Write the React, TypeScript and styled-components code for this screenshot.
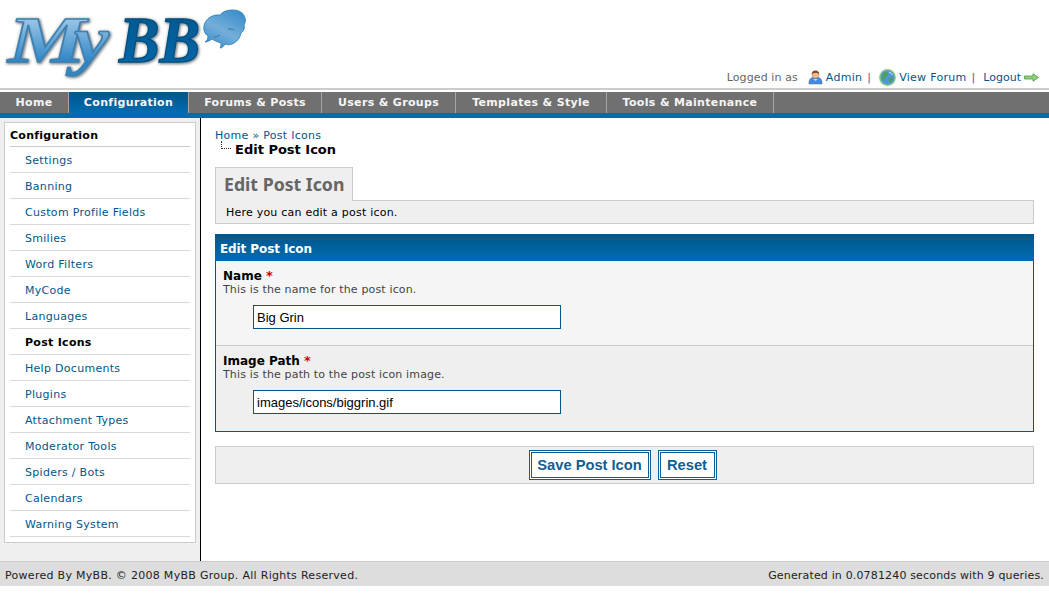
import React from 'react';
import styled, { createGlobalStyle } from 'styled-components';

const GlobalStyle = createGlobalStyle`
  html, body {
    margin: 0;
    padding: 0;
    background: #fff;
    font-family: "DejaVu Sans", Verdana, sans-serif;
    font-size: 11px;
    letter-spacing: 0.29px;
    color: #000;
  }
  a { color: #026cb1; text-decoration: none; }
`;

const Logo = styled.svg`
  display: block;
  position: absolute;
  left: 0;
  top: 0;
`;

const LogoWord = styled.text`
  font-family: "Liberation Serif", serif;
  font-style: italic;
  font-weight: bold;
  font-size: 66px;
  letter-spacing: 0;
  stroke-width: 1.4px;
  filter: drop-shadow(1px 1px 1px #858a8f) drop-shadow(0 0 1.5px #b4b9be);
`;

const Header = styled.header`
  position: relative;
  height: 88px;
  border-bottom: 2px solid #ccc;
`;

const UserBar = styled.div`
  position: absolute;
  right: 10px;
  top: 68px;
  display: flex;
  align-items: center;
  height: 18px;
  color: #666;
  letter-spacing: 0.1px;
  white-space: nowrap;
`;

const UserLink = styled.a<{ $gap?: number }>`
  display: inline-flex;
  align-items: center;
  gap: 3px;
  margin-left: ${(p) => p.$gap || 0}px;
  color: #02568a;
  letter-spacing: 0.29px;
`;

const LogoutLink = styled(UserLink)`
  letter-spacing: 0;
`;

const Pipe = styled.span`
  color: #7a4a8c;
  margin-left: 5px;
`;

const Nav = styled.nav`
  margin-top: 2px;
  display: flex;
  height: 21px;
  background: #707070;
  border-bottom: 5px solid #026cb1;
`;

const Tab = styled.a<{ $active?: boolean; $w: number }>`
  display: block;
  box-sizing: border-box;
  width: ${(p) => p.$w}px;
  text-align: center;
  line-height: 21px;
  font-weight: bold;
  letter-spacing: 0.33px;
  color: #f5f5f5;
  border-right: 1px solid #a5a5a5;
  background: ${(p) => (p.$active ? 'linear-gradient(#02568a, #026cb1)' : 'transparent')};
  white-space: nowrap;
`;

const Page = styled.div`
  display: flex;
  align-items: stretch;
`;

const Sidebar = styled.aside`
  width: 192px;
  flex: none;
  padding: 4px 4px 18px;
  background: #efefef;
  border-right: 1px solid #000;
`;

const SideBox = styled.div`
  background: #fff;
  border: 1px solid #ccc;
  padding: 0 5px 5px;
`;

const SideTitle = styled.div`
  height: 23px;
  line-height: 25px;
  font-weight: bold;
  letter-spacing: 0.25px;
  border-bottom: 1px solid #ccc;
`;

const SideItem = styled.a<{ $active?: boolean }>`
  display: block;
  height: 25px;
  line-height: 27px;
  padding-left: 15px;
  border-bottom: 1px solid #d9d9d9;
  color: ${(p) => (p.$active ? '#000' : '#02568a')};
  font-weight: ${(p) => (p.$active ? 'bold' : 'normal')};
`;

const Main = styled.main`
  flex: 1;
  min-width: 0;
  padding: 11px 15px 0 14px;
`;

const Crumbs = styled.div`
  color: #02568a;
  line-height: 13px;
`;

const CurrentCrumb = styled.div`
  position: relative;
  margin-left: 20px;
  font-size: 13px;
  font-weight: bold;
  letter-spacing: 0;
  line-height: 16px;
  &::before {
    content: "";
    position: absolute;
    left: -14px;
    top: -1px;
    width: 9px;
    height: 7px;
    border-left: 1px dotted #333;
    border-bottom: 1px dotted #333;
  }
`;

const PageTab = styled.h2`
  display: block;
  box-sizing: border-box;
  margin: 9px 0 0;
  height: 34px;
  width: 138px;
  padding-left: 8px;
  background: #efefef;
  border: 1px solid #ccc;
  border-bottom: 0;
  color: #666;
  font-family: "Noto Sans", Tahoma, sans-serif;
  font-size: 17.7px;
  font-weight: 700;
  letter-spacing: 0;
  line-height: 33px;
  white-space: nowrap;
  position: relative;
  z-index: 1;
`;

const Intro = styled.div`
  box-sizing: border-box;
  margin-top: -1px;
  height: 24px;
  line-height: 24px;
  padding-left: 10px;
  background: #efefef;
  border: 1px solid #ccc;
  letter-spacing: 0.22px;
`;

const Panel = styled.section`
  margin-top: 10px;
  border: 1px solid #02568a;
  border-top: 0;
`;

const PanelHead = styled.div`
  height: 27px;
  line-height: 30px;
  margin: 0 -1px;
  padding-left: 5px;
  background: linear-gradient(#02568a, #026cb1);
  color: #fff;
  font-size: 12px;
  font-weight: bold;
  letter-spacing: -0.1px;
`;

const Row = styled.div<{ $alt?: boolean }>`
  box-sizing: border-box;
  height: 85px;
  padding: 8px 7px 0;
  background: ${(p) => (p.$alt ? '#efefef' : '#f5f5f5')};
  border-bottom: ${(p) => (p.$alt ? '0' : '1px solid #ccc')};
`;

const Label = styled.label`
  display: block;
  font-size: 12px;
  font-weight: bold;
  letter-spacing: 0;
  line-height: 13px;
`;

const Required = styled.span`
  color: #c00;
  font-size: 13px;
`;

const Hint = styled.div`
  color: #444;
  line-height: 13px;
  letter-spacing: 0.15px;
`;

const TextInput = styled.input`
  display: block;
  box-sizing: border-box;
  margin: 9px 0 0 30px;
  width: 308px;
  height: 24px;
  padding: 0 3px;
  border: 1px solid #02568a;
  background: #fff;
  color: #000;
  font-family: "Liberation Sans", Arial, sans-serif;
  font-size: 13px;
  letter-spacing: 0;
  outline: 0;
`;

const ButtonBar = styled.div`
  margin-top: 14px;
  height: 38px;
  box-sizing: border-box;
  display: flex;
  justify-content: center;
  align-items: center;
  gap: 7px;
  padding-right: 4px;
  background: #efefef;
  border: 1px solid #ccc;
`;

const Btn = styled.button<{ $w: number }>`
  box-sizing: border-box;
  width: ${(p) => p.$w}px;
  height: 30px;
  padding: 0;
  border: 3px double #0f5f96;
  background: #fff;
  color: #0f5f96;
  font-family: "Liberation Sans", Arial, sans-serif;
  font-size: 14.7px;
  font-weight: bold;
  letter-spacing: 0;
`;

const Footer = styled.footer`
  display: flex;
  justify-content: space-between;
  height: 24px;
  line-height: 27px;
  padding: 0 5px;
  background: #ddd;
  border-top: 1px solid #ccc;
  color: #222;
`;

const FooterStats = styled.span`
  letter-spacing: 0.16px;
`;

const sideLinks = [
  'Settings', 'Banning', 'Custom Profile Fields', 'Smilies', 'Word Filters', 'MyCode', 'Languages',
  'Post Icons', 'Help Documents', 'Plugins', 'Attachment Types', 'Moderator Tools', 'Spiders / Bots',
  'Calendars', 'Warning System',
];

const tabs = [
  { label: 'Home', width: 69 },
  { label: 'Configuration', width: 120 },
  { label: 'Forums & Posts', width: 133 },
  { label: 'Users & Groups', width: 134 },
  { label: 'Templates & Style', width: 151 },
  { label: 'Tools & Maintenance', width: 167 },
];

const MyBBLogo = () => (
  <Logo width="260" height="86" viewBox="0 0 260 86">
    <defs>
      <linearGradient id="my" x1="0" y1="0" x2="0" y2="1">
        <stop offset="0.15" stopColor="#a9cde9" />
        <stop offset="0.8" stopColor="#2f86c6" />
      </linearGradient>
      <linearGradient id="bb" x1="0" y1="0" x2="0" y2="1">
        <stop offset="0" stopColor="#02568a" />
        <stop offset="1" stopColor="#0468ae" />
      </linearGradient>
      <linearGradient id="bubble" x1="0.8" y1="0" x2="0.2" y2="1">
        <stop offset="0" stopColor="#3a8ecb" />
        <stop offset="0.55" stopColor="#74aed9" />
        <stop offset="1" stopColor="#3d8dca" />
      </linearGradient>
    </defs>
    <LogoWord y="62" fill="url(#my)" stroke="#3d80b2">
      <tspan x="8" textLength="78" lengthAdjust="spacingAndGlyphs">M</tspan>
      <tspan x="74" textLength="35" lengthAdjust="spacingAndGlyphs">y</tspan>
    </LogoWord>
    <LogoWord x="119" y="62" textLength="81" lengthAdjust="spacingAndGlyphs" fill="url(#bb)" stroke="#02507f">BB</LogoWord>
    <path
      d="M220 15c3-4 8-5 13-5 6 0 11 3 12 8 1 3 0 5-1 7 1 3 0 6-3 8-1 5-4 9-9 11-2 1-5 1-7 0-1 2-3 4-5 4 1-1 1-3 1-5-3-1-6-2-9-4-2 1-4 3-7 3 2-1 3-3 3-6-3-2-5-6-4-10 1-6 6-10 12-11 1 0 3 0 4 0z"
      fill="url(#bubble)" stroke="#2379b6" strokeWidth="0.8"
    />
    <path d="M228 29c2 0 4 0 6 1M214 37c2 0 4-1 6-2" stroke="#1f6fa8" strokeWidth="0.8" fill="none" />
  </Logo>
);

const UserIcon = () => (
  <svg width="15" height="15" viewBox="0 0 15 15">
    <path d="M1 14c-.500-3 1-6 3.500-6.500h6c2.500.500 4 3.500 3.500 6.500z" fill="#3f8be8" stroke="#6d7a8c" strokeWidth=".6" />
    <path d="M5 9l2.500 2L10 9" fill="#bcd8f5" />
    <circle cx="7.500" cy="5" r="3.300" fill="#efbd96" stroke="#9a6a45" strokeWidth=".5" />
    <path d="M3.800 4.500C3.600 1.500 5.500.500 7.500.500s3.900 1 3.700 4C10 3 9 2.800 7.500 3s-2.700 0-3.700 1.500z" fill="#8a4a22" />
  </svg>
);

const GlobeIcon = () => (
  <svg width="17" height="17" viewBox="0 0 17 17">
    <circle cx="8.500" cy="8.500" r="7.700" fill="#4f97d6" stroke="#8cc48a" strokeWidth="1.400" />
    <path d="M5 3.500c2-1 4 0 4 2s-2 2-3 4-1 3-2 2-2-5 1-8zM10 9c2-1 4 0 4 1s-2 3.500-3 3.500-2-2.500-1-4.500z" fill="#4f9f62" />
    <path d="M10 3.500c1.500 0 3 1.200 3.500 2.500" stroke="#d5ecf7" strokeWidth="1" fill="none" />
  </svg>
);

const ArrowIcon = () => (
  <svg width="15" height="9" viewBox="0 0 15 9">
    <path d="M.500 3h8.500V.700L14.500 4.500 9 8.300V6H.500z" fill="#8fcf7a" stroke="#4f9a4a" strokeWidth=".8" />
  </svg>
);

export default function App() {
  return (
    <>
      <GlobalStyle />
      <Header>
        <MyBBLogo />
        <UserBar>
          Logged in as
          <UserLink $gap={10}><UserIcon />Admin</UserLink>
          <Pipe>|</Pipe>
          <UserLink $gap={8}><GlobeIcon />View Forum</UserLink>
          <Pipe>|</Pipe>
          <LogoutLink $gap={8}>Logout<ArrowIcon /></LogoutLink>
        </UserBar>
      </Header>
      <Nav>
        {tabs.map((t) => (
          <Tab key={t.label} $w={t.width} $active={t.label === 'Configuration'}>{t.label}</Tab>
        ))}
      </Nav>
      <Page>
        <Sidebar>
          <SideBox>
            <SideTitle>Configuration</SideTitle>
            {sideLinks.map((l) => (
              <SideItem key={l} $active={l === 'Post Icons'}>{l}</SideItem>
            ))}
          </SideBox>
        </Sidebar>
        <Main>
          <Crumbs>Home » Post Icons</Crumbs>
          <CurrentCrumb>Edit Post Icon</CurrentCrumb>
          <PageTab>Edit Post Icon</PageTab>
          <Intro>Here you can edit a post icon.</Intro>
          <Panel>
            <PanelHead>Edit Post Icon</PanelHead>
            <Row>
              <Label>Name <Required>*</Required></Label>
              <Hint>This is the name for the post icon.</Hint>
              <TextInput defaultValue="Big Grin" />
            </Row>
            <Row $alt>
              <Label>Image Path <Required>*</Required></Label>
              <Hint>This is the path to the post icon image.</Hint>
              <TextInput defaultValue="images/icons/biggrin.gif" />
            </Row>
          </Panel>
          <ButtonBar>
            <Btn $w={122}>Save Post Icon</Btn>
            <Btn $w={59}>Reset</Btn>
          </ButtonBar>
        </Main>
      </Page>
      <Footer>
        <span>Powered By MyBB. © 2008 MyBB Group. All Rights Reserved.</span>
        <FooterStats>Generated in 0.0781240 seconds with 9 queries.</FooterStats>
      </Footer>
    </>
  );
}
